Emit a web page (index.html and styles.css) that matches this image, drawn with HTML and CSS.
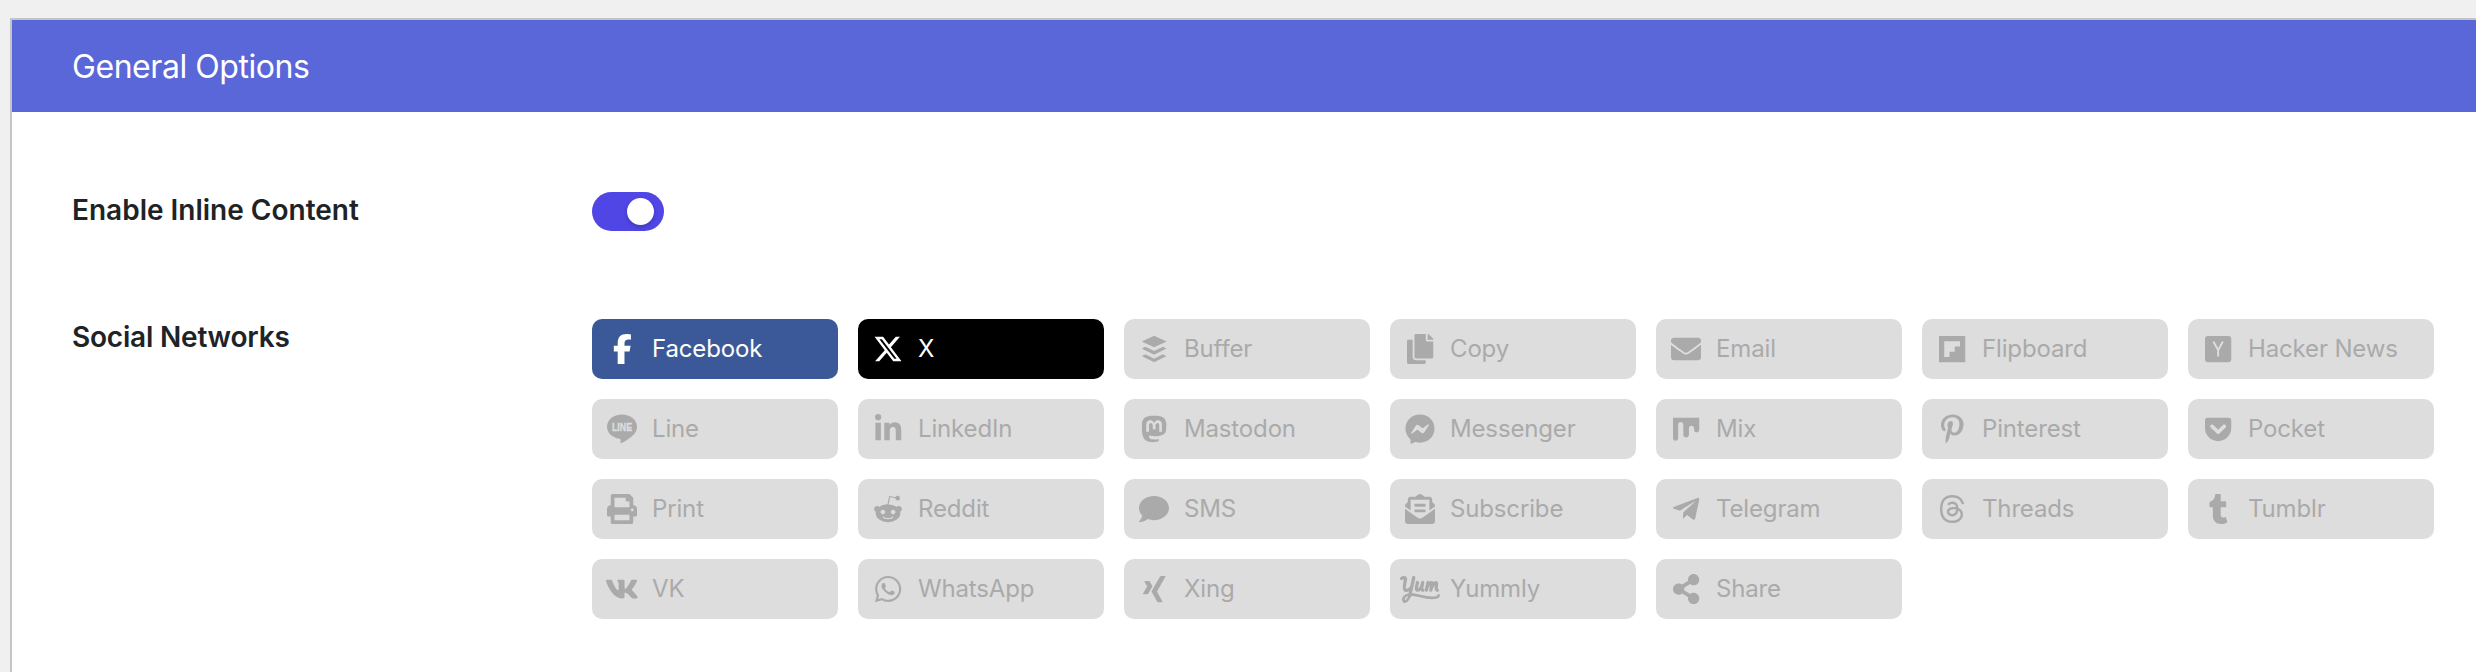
FILE: index.html
```
<!DOCTYPE html>
<html lang="en">
<head>
<meta charset="utf-8">
<title>General Options</title>
<link rel="stylesheet" href="styles.css">
</head>
<body>
<main class="panel">
  <header class="panel-header"><h2 class="panel-title">General Options</h2></header>
  <section class="row row-toggle">
    <div class="row-label label-enable">Enable Inline Content</div>
    <div class="toggle"><span class="knob"></span></div>
  </section>
  <section class="row row-networks">
    <div class="row-label label-social">Social Networks</div>
    <div class="networks">
      <div class="network facebook"><span class="icon"><svg viewBox="0 0 320 512"><path d="M80 299.3V512H196V299.3h86.5l18-97.8H196V166.9c0-51.7 20.3-71.5 72.7-71.5c16.3 0 29.4 .4 37 1.2V7.9C291.4 4 256.4 0 236.2 0C129.3 0 80 50.5 80 159.4v42.1H14v97.8H80z"/></svg></span><span class="name">Facebook</span></div>
      <div class="network x"><span class="icon"><svg viewBox="0 0 512 512"><path d="M389.2 48h70.6L305.6 224.2 487 464H345L233.7 318.6 106.5 464H35.8L200.7 275.5 26.8 48H172.4L272.9 180.9 389.2 48zM364.4 421.8h39.1L151.1 88h-42L364.4 421.8z"/></svg></span><span class="name">X</span></div>
      <div class="network"><span class="icon"><svg viewBox="0 0 448 512"><path d="M427.84 380.67l-196.5 97.82a18.6 18.6 0 0 1-14.67 0L20.16 380.67c-4-2-4-5.28 0-7.29L67.22 350a18.65 18.65 0 0 1 14.69 0l134.76 67a18.51 18.51 0 0 0 14.67 0l134.76-67a18.62 18.62 0 0 1 14.68 0l47.06 23.43c4.05 1.96 4.05 5.24 0 7.24zm0-136.53l-47.06-23.43a18.62 18.62 0 0 0-14.68 0l-134.76 67.08a18.68 18.68 0 0 1-14.67 0L81.91 220.71a18.65 18.65 0 0 0-14.69 0l-47.06 23.43c-4 2-4 5.29 0 7.31l196.51 97.8a18.6 18.6 0 0 0 14.67 0l196.5-97.8c4.05-2.02 4.05-5.3 0-7.31zM20.16 130.42l196.5 90.29a20.08 20.08 0 0 0 14.67 0l196.51-90.29c4-1.86 4-4.89 0-6.74L231.33 33.39a19.88 19.88 0 0 0-14.67 0l-196.5 90.29c-4.05 1.85-4.05 4.88 0 6.74z"/></svg></span><span class="name">Buffer</span></div>
      <div class="network"><span class="icon"><svg viewBox="0 0 448 512"><path d="M320 448v40c0 13.255-10.745 24-24 24H24c-13.255 0-24-10.745-24-24V120c0-13.255 10.745-24 24-24h72v296c0 30.879 25.121 56 56 56h168zm0-344V0H152c-13.255 0-24 10.745-24 24v368c0 13.255 10.745 24 24 24h272c13.255 0 24-10.745 24-24V128H344c-13.2 0-24-10.8-24-24zm120.971-31.029L375.029 7.029A24 24 0 0 0 358.059 0H352v96h96v-6.059a24 24 0 0 0-7.029-16.97z"/></svg></span><span class="name">Copy</span></div>
      <div class="network"><span class="icon"><svg viewBox="0 0 512 512"><path d="M502.3 190.8c3.9-3.1 9.7-.2 9.7 4.7V400c0 26.5-21.5 48-48 48H48c-26.5 0-48-21.5-48-48V195.6c0-5 5.7-7.8 9.7-4.7 22.4 17.4 52.1 39.5 154.1 113.6 21.1 15.4 56.7 47.8 92.2 47.6 35.7.3 72-32.8 92.3-47.6 102-74.1 131.6-96.3 154-113.7zM256 320c23.2.4 56.6-29.2 73.4-41.4 132.7-96.3 142.8-104.7 173.4-128.7 5.8-4.5 9.2-11.5 9.2-18.9v-19c0-26.5-21.5-48-48-48H48c-26.5 0-48 21.5-48 48v19c0 7.4 3.4 14.3 9.2 18.9 30.6 23.9 40.7 32.4 173.4 128.7 16.8 12.2 50.2 41.8 73.4 41.4z"/></svg></span><span class="name">Email</span></div>
      <div class="network"><span class="icon"><svg viewBox="0 0 448 512"><path d="M0 32v448h448V32H0zm358.4 179.2h-89.6v89.6h-89.6v89.6H89.6V121.6h268.8v89.6z"/></svg></span><span class="name">Flipboard</span></div>
      <div class="network"><span class="icon"><svg viewBox="0 0 448 512"><rect y="32" width="448" height="448" rx="48"/><path class="cut" d="M143 128l81 150 81-150M224 270v114" stroke-width="33"/></svg></span><span class="name">Hacker News</span></div>

      <div class="network"><span class="icon"><svg viewBox="0 0 30 30"><path d="M15 .6C6.7.6 0 6 0 12.8c0 6 5.3 11 12.5 12 1.3.3 1.3.9 1 2.7-.2 1.1-.2 2.1 1 1.6C17 28 24.5 23.2 27.6 19.4 29.3 17.4 30 15.2 30 12.8 30 6 23.3.6 15 .6z"/><text class="line-word" x="15" y="17" textLength="20" lengthAdjust="spacingAndGlyphs">LINE</text></svg></span><span class="name">Line</span></div>
      <div class="network"><span class="icon"><svg viewBox="0 0 448 512"><path d="M100.28 448H7.4V148.9h92.88zM53.79 108.1C24.09 108.1 0 83.5 0 53.8a53.79 53.79 0 0 1 107.58 0c0 29.7-24.1 54.3-53.79 54.3zM447.9 448h-92.68V302.4c0-34.7-.7-79.2-48.29-79.2-48.29 0-55.69 37.7-55.69 76.7V448h-92.78V148.9h89.08v40.8h1.3c12.4-23.5 42.69-48.3 87.88-48.3 94 0 111.28 61.9 111.28 142.3V448z"/></svg></span><span class="name">LinkedIn</span></div>
      <div class="network"><span class="icon"><svg viewBox="0 0 448 512"><path d="M433 179.11c0-97.2-63.71-125.7-63.71-125.7-62.52-28.7-228.56-28.4-290.48 0 0 0-63.72 28.5-63.72 125.7 0 115.7-6.6 259.4 105.63 289.1 40.51 10.7 75.32 13 103.33 11.4 50.81-2.8 79.32-18.1 79.32-18.1l-1.7-36.9s-36.31 11.4-77.12 10.1c-40.41-1.4-83-4.4-89.63-54a102.54 102.54 0 0 1-.9-13.9c85.63 20.9 158.65 9.1 178.75 6.7 56.12-6.7 105-41.3 111.23-72.9 9.8-49.8 9-121.5 9-121.5zm-75.12 125.2h-46.63v-114.2c0-49.7-64-51.6-64 6.9v62.5h-46.33V197c0-58.5-64-56.6-64-6.9v114.2H90.19c0-122.1-5.2-147.9 18.41-175 25.9-28.9 79.82-30.8 103.83 6.1l11.6 19.5 11.6-19.5c24.11-37.1 78.12-34.8 103.83-6.1 23.71 27.3 18.4 53 18.4 175z"/></svg></span><span class="name">Mastodon</span></div>
      <div class="network"><span class="icon"><svg viewBox="0 0 512 512"><path d="M256.55 8C116.52 8 8 110.34 8 248.57c0 72.3 29.71 134.78 78.07 177.94 8.35 7.51 6.63 11.86 8.05 58.23A19.92 19.92 0 0 0 122 502.31c52.91-23.3 53.59-25.14 62.56-22.7C337.85 521.8 504 423.7 504 248.57 504 110.34 396.59 8 256.55 8zm149.24 185.13l-73 115.57a37.37 37.37 0 0 1-53.91 9.93l-58.08-43.47a15 15 0 0 0-18 0l-78.37 59.44c-10.46 7.93-24.16-4.6-17.11-15.67l73-115.57a37.36 37.36 0 0 1 53.91-9.93l58.06 43.46a15 15 0 0 0 18 0l78.41-59.38c10.44-7.98 24.14 4.54 17.09 15.62z"/></svg></span><span class="name">Messenger</span></div>
      <div class="network"><span class="icon"><svg viewBox="0 0 448 512"><path d="M0 64v348.9c0 56.2 88 58.1 88 0V174.3c7.9-52.9 88-50.4 88 6.5v175.3c0 57.9 96 58 96 0V240c5.3-54.7 88-52.5 88 4.3v23.8c0 59.9 88 56.6 88 0V64H0z"/></svg></span><span class="name">Mix</span></div>
      <div class="network"><span class="icon"><svg viewBox="0 0 384 512"><path d="M204 6.5C101.4 6.5 0 74.9 0 185.6 0 256 39.6 296 63.6 296c9.9 0 15.6-27.6 15.6-35.4 0-9.3-23.7-29.1-23.7-67.8 0-80.4 61.2-137.4 140.4-137.4 68.1 0 118.5 38.7 118.5 109.8 0 53.1-21.3 152.7-90.3 152.7-24.9 0-46.2-18-46.2-43.8 0-37.8 26.4-74.4 26.4-113.4 0-66.2-93.9-54.2-93.9 25.8 0 16.8 2.1 35.4 9.6 50.7-13.8 59.4-42 147.9-42 209.1 0 18.9 2.7 37.5 4.5 56.4 3.4 3.8 1.7 3.4 6.9 1.5 50.4-69 48.6-82.5 71.4-172.8 12.3 23.4 44.1 36 69.3 36 106.2 0 153.9-103.5 153.9-196.8C384 71.3 298.2 6.5 204 6.5z"/></svg></span><span class="name">Pinterest</span></div>
      <div class="network"><span class="icon"><svg viewBox="0 0 448 512"><path d="M407.6 64h-367C18.5 64 0 82.5 0 104.6v135.2C0 364.5 99.7 464 224.2 464c124 0 223.8-99.5 223.8-224.2V104.6c0-22.4-17.7-40.6-40.4-40.6zm-162 268.5c-12.4 11.8-31.4 11.1-42.4 0C89.5 223.6 88.3 227.4 88.3 209.3c0-16.9 13.8-30.7 30.7-30.7 17 0 16.1 3.8 105.2 89.3 90.6-86.9 88.6-89.3 105.5-89.3 16.9 0 30.7 13.8 30.7 30.7 0 17.8-2.9 15.7-114.8 123.2z"/></svg></span><span class="name">Pocket</span></div>

      <div class="network"><span class="icon"><svg viewBox="0 0 512 512"><path d="M448 192V77.25c0-8.49-3.37-16.62-9.37-22.63L393.37 9.37c-6-6-14.14-9.37-22.63-9.37H96C78.33 0 64 14.33 64 32v160c-35.35 0-64 28.65-64 64v112c0 8.84 7.16 16 16 16h48v96c0 17.67 14.33 32 32 32h320c17.67 0 32-14.33 32-32v-96h48c8.84 0 16-7.16 16-16V256c0-35.35-28.65-64-64-64zm-64 256H128v-96h256v96zm0-224H128V64h192v48c0 8.84 7.16 16 16 16h48v96zm48 72c-13.25 0-24-10.75-24-24 0-13.26 10.75-24 24-24s24 10.74 24 24c0 13.25-10.75 24-24 24z"/></svg></span><span class="name">Print</span></div>
      <div class="network"><span class="icon"><svg viewBox="0 0 512 512"><path d="M440.3 203.5c-15 0-28.2 6.2-37.9 15.9-35.7-24.7-83.8-40.6-137.1-42.3L293 52.3l88.2 19.8c0 21.6 17.6 39.2 39.2 39.2 22 0 39.7-18.1 39.7-39.7s-17.6-39.7-39.7-39.7c-15.4 0-28.7 9.3-35.3 22l-97.4-21.6c-4.9-1.3-9.7 2.2-11 7.1L246.3 177c-52.9 2.2-100.5 18.1-136.3 42.8-9.7-10.1-23.4-16.3-38.4-16.3-55.6 0-73.8 74.6-22.9 100.1-1.8 7.9-2.6 16.3-2.6 24.7 0 83.8 94.4 151.7 210.3 151.7 116.4 0 210.8-67.9 210.8-151.7 0-8.4-.9-17.2-3.1-25.1 49.9-25.6 31.5-99.7-23.8-99.7zM129.4 308.9c0-22 17.6-39.7 39.7-39.7 21.6 0 39.2 17.6 39.2 39.7 0 21.6-17.6 39.2-39.2 39.2-22 .1-39.7-17.6-39.7-39.2zm214.3 93.5c-36.4 36.4-139.1 36.4-175.5 0-4-3.5-4-9.7 0-13.7 3.5-3.5 9.7-3.5 13.2 0 27.8 28.5 120 29 149 0 3.5-3.5 9.7-3.5 13.2 0 4.1 4 4.1 10.2.1 13.7zm-.8-54.2c-21.6 0-39.2-17.6-39.2-39.2 0-22 17.6-39.7 39.2-39.7 22 0 39.7 17.6 39.7 39.7-.1 21.5-17.7 39.2-39.7 39.2z"/></svg></span><span class="name">Reddit</span></div>
      <div class="network"><span class="icon"><svg viewBox="0 0 512 512"><path d="M256 32C114.6 32 0 125.1 0 240c0 49.6 21.4 95 57 130.7C44.5 421.1 2.7 466 2.2 466.5c-2.2 2.3-2.8 5.7-1.5 8.7S4.8 480 8 480c66.3 0 116-31.8 140.6-51.4 32.7 12.3 69 19.4 107.4 19.4 141.4 0 256-93.1 256-208S397.4 32 256 32z"/></svg></span><span class="name">SMS</span></div>
      <div class="network"><span class="icon"><svg viewBox="0 0 512 512"><path d="M176 216h160c8.84 0 16-7.16 16-16v-16c0-8.84-7.16-16-16-16H176c-8.84 0-16 7.16-16 16v16c0 8.84 7.16 16 16 16zm-16 80c0 8.84 7.16 16 16 16h160c8.84 0 16-7.16 16-16v-16c0-8.84-7.16-16-16-16H176c-8.84 0-16 7.16-16 16v16zm96 121.13c-16.42 0-32.84-5.06-46.86-15.19L0 250.86V464c0 26.51 21.49 48 48 48h416c26.51 0 48-21.49 48-48V250.86L302.86 401.94c-14.02 10.12-30.44 15.19-46.86 15.19zm237.61-254.18c-8.85-6.94-17.24-13.47-29.61-22.81V96c0-26.51-21.49-48-48-48h-77.55c-3.04-2.2-5.87-4.26-9.04-6.56C312.6 29.17 279.2-.35 256 0c-23.2-.35-56.59 29.17-73.41 41.44-3.17 2.3-6 4.36-9.04 6.56H96c-26.51 0-48 21.49-48 48v44.14c-12.37 9.33-20.76 15.87-29.61 22.81A47.995 47.995 0 0 0 0 200.72v10.65l96 69.35V96h320v184.72l96-69.35v-10.65c0-14.74-6.78-28.67-18.39-37.77z"/></svg></span><span class="name">Subscribe</span></div>
      <div class="network"><span class="icon"><svg viewBox="0 0 448 512"><path d="M446.7 98.6l-67.6 318.8c-5.1 22.5-18.4 28.1-37.3 17.5l-103-75.9-49.7 47.8c-5.5 5.5-10.1 10.1-20.7 10.1l7.4-104.9 190.9-172.5c8.3-7.4-1.8-11.5-12.9-4.1L117.8 284 16.2 252.2c-22.1-6.9-22.5-22.1 4.6-32.7L418.2 66.4c18.4-6.9 34.5 4.1 28.5 32.2z"/></svg></span><span class="name">Telegram</span></div>
      <div class="network"><span class="icon"><svg viewBox="0 0 448 512"><path d="M331.5 235.7c2.2 .9 4.2 1.9 6.3 2.8c29.2 14.1 50.6 35.2 61.8 61.4c15.7 36.5 17.2 95.8-30.3 143.2c-36.2 36.2-80.3 52.5-142.6 53h-.3c-70.2-.5-124.1-24.1-160.4-70.2c-32.3-41-48.9-98.1-49.5-169.6V256v-.2C17 184.3 33.6 127.2 65.9 86.2C102.2 40.1 156.2 16.5 226.4 16h.3c70.3 .5 124.9 24 162.3 69.9c18.4 22.7 32 50 40.6 81.7l-40.4 10.8c-7.1-25.8-17.8-47.8-32.2-65.4c-29.2-35.8-73-54.2-130.5-54.6c-57 .5-100.1 18.8-128.2 54.4C72.1 146.1 58.5 194.3 58 256c.5 61.7 14.1 109.9 40.3 143.3c28 35.6 71.2 53.9 128.2 54.4c51.4-.4 85.4-12.6 113.7-40.9c32.3-32.2 31.7-71.8 21.4-95.9c-6.1-14.2-17.1-26-31.9-34.9c-3.7 26.9-11.8 48.3-24.7 64.8c-17.1 21.8-41.4 33.6-72.7 35.3c-23.6 1.3-46.3-4.4-63.9-16c-20.8-13.8-33-34.8-34.3-59.3c-2.5-48.3 35.7-83 95.2-86.4c21.1-1.2 40.9-.3 59.2 2.8c-2.4-14.8-7.3-26.6-14.6-35.2c-10-11.7-25.6-17.7-46.2-17.8H227c-16.6 0-39 4.6-53.3 26.3l-34.4-23.6c19.2-29.1 50.3-45.1 87.8-45.1h.8c62.6 .4 99.9 39.5 103.7 107.7l-.2 .2zm-156 68.8c1.3 25.1 28.4 36.8 54.6 35.3c25.6-1.4 54.6-11.4 59.5-73.2c-13.2-2.9-27.8-4.4-43.4-4.4c-4.8 0-9.6 .1-14.4 .4c-42.9 2.4-57.2 23.2-56.2 41.8l-.1 .1z"/></svg></span><span class="name">Threads</span></div>
      <div class="network"><span class="icon"><svg viewBox="0 0 320 512"><path d="M309.8 480.3c-13.6 14.5-50 31.7-97.4 31.7-120.8 0-147-88.8-147-140.6v-144H17.9c-5.5 0-10-4.5-10-10v-68c0-7.2 4.5-13.6 11.3-16 62-21.8 81.5-76 84.3-117.1.8-11 6.5-16.3 16.1-16.3h70.9c5.5 0 10 4.5 10 10v115.2h83c5.5 0 10 4.4 10 9.9v81.7c0 5.5-4.5 10-10 10h-83.4V360c0 34.2 23.7 53.6 68 35.8 4.8-1.9 9-3.2 12.7-2.2 3.5.9 5.8 3.4 7.4 7.9l22 64.3c1.8 5 3.3 10.6-.4 14.5z"/></svg></span><span class="name">Tumblr</span></div>

      <div class="network"><span class="icon"><svg viewBox="0 0 576 512"><path d="M545 117.7c3.7-12.5 0-21.7-17.8-21.7h-58.9c-15 0-21.9 7.9-25.6 16.7 0 0-30 73.1-72.4 120.5-13.7 13.7-20 18.1-27.5 18.1-3.7 0-9.4-4.4-9.4-16.9V117.7c0-15-4.2-21.7-16.6-21.7h-92.6c-9.4 0-15 7-15 13.5 0 14.2 21.2 17.5 23.4 57.5v86.8c0 19-3.4 22.5-10.9 22.5-20 0-68.6-73.4-97.4-157.4-5.8-16.3-11.5-22.9-26.6-22.9H38.8c-16.8 0-20.2 7.9-20.2 16.7 0 15.6 20 93.1 93.1 195.5C160.4 378.1 229 416 291.4 416c37.5 0 42.1-8.4 42.1-22.9 0-66.8-3.4-73.1 15.4-73.1 8.7 0 23.7 4.4 58.7 38.1 40 40 46.6 57.9 69 57.9h58.9c16.8 0 25.3-8.4 20.4-25-11.2-34.9-86.9-106.7-90.3-111.5-8.7-11.2-6.2-16.2 0-26.2.1-.1 72-101.3 79.4-135.6z"/></svg></span><span class="name">VK</span></div>
      <div class="network"><span class="icon"><svg viewBox="0 0 448 512"><path d="M380.9 97.1C339 55.1 283.2 32 223.9 32c-122.4 0-222 99.6-222 222 0 39.1 10.2 77.3 29.6 111L0 480l117.7-30.9c32.4 17.7 68.9 27 106.1 27h.1c122.3 0 224.1-99.6 224.1-222 0-59.3-25.2-115-67.1-157zm-157 341.6c-33.2 0-65.7-8.9-94-25.7l-6.7-4-69.8 18.3L72 359.2l-4.4-7c-18.5-29.4-28.2-63.3-28.2-98.2 0-101.7 82.8-184.5 184.6-184.5 49.3 0 95.6 19.2 130.4 54.1 34.8 34.9 56.2 81.2 56.1 130.5 0 101.8-84.9 184.6-186.6 184.6zm101.2-138.2c-5.5-2.8-32.8-16.2-37.9-18-5.1-1.9-8.8-2.8-12.5 2.8-3.7 5.6-14.3 18-17.6 21.8-3.2 3.7-6.5 4.2-12 1.4-32.6-16.3-54-29.1-75.5-66-5.7-9.8 5.7-9.1 16.3-30.3 1.8-3.7.9-6.9-.5-9.7-1.4-2.8-12.5-30.1-17.1-41.2-4.5-10.8-9.1-9.3-12.5-9.5-3.2-.2-6.9-.2-10.6-.2-3.7 0-9.7 1.4-14.8 6.9-5.1 5.6-19.4 19-19.4 46.3 0 27.3 19.9 53.7 22.6 57.4 2.8 3.7 39.1 59.7 94.8 83.8 35.2 15.2 49 16.5 66.6 13.9 10.7-1.6 32.8-13.4 37.4-26.4 4.6-13 4.6-24.1 3.2-26.4-1.3-2.5-5-3.9-10.5-6.6z"/></svg></span><span class="name">WhatsApp</span></div>
      <div class="network"><span class="icon"><svg viewBox="0 0 384 512"><path d="M162.7 210c-1.8 3.3-25.2 44.4-70.1 123.5-4.9 8.3-10.8 12.5-17.7 12.5H9.8c-7.7 0-12.1-7.5-8.5-14.4l69-121.3c.2 0 .2-.1 0-.3l-43.9-75.6c-4.3-7.8.3-14.1 8.5-14.1H100c7.3 0 13.3 4.1 18 12.2l44.7 77.5zM382.6 46.1l-144 253v.3L330.2 466c3.9 7.1.2 14.1-8.5 14.1h-65.2c-7.6 0-13.6-4-18-12.2l-92.4-168.5c3.3-5.8 51.5-90.8 144.8-255.2 4.6-8.1 10.4-12.2 17.5-12.2h65.7c8 0 12.3 6.7 8.5 14.1z"/></svg></span><span class="name">Xing</span></div>
      <div class="network"><span class="icon"><svg viewBox="0 0 40 30"><g class="strokes"><path class="heavy" d="M1.5 4.5C3.2 3.2 5.8 3 5.5 5.200 5.200 8 2.800 15 5.500 16.200 8.500 17 11 14 12 11.500M13.800 3.500C12.500 9 11 16.500 9.700 22"/><path d="M9.700 21.500C8.500 26 5.500 28.300 4 27.300 2.300 25.500 4 21.200 9 20.500 17 19.500 26 25.800 36 23.500 38 23 38.800 22 38.600 21.200"/><path class="heavy" d="M17.500 8.500C16.500 12 15.500 16 17.700 16.200 20 16.200 21.800 12.500 22.700 8.500 22 12 21.200 15.800 22.800 16.200M26.300 16.200L28 8.500C28 12 27.300 13.500 27.800 12 29 9 32 7.500 32 9.500L30.800 16.200C32 11 35 7.800 36.500 9 37.200 10.500 34.800 15.500 37.300 16.200"/></g></svg></span><span class="name">Yummly</span></div>
      <div class="network"><span class="icon"><svg viewBox="0 0 448 512"><path d="M352 320c-22.608 0-43.387 7.819-59.79 20.895l-102.486-64.054a96.551 96.551 0 0 0 0-41.683l102.486-64.054C308.613 184.181 329.392 192 352 192c53.019 0 96-42.981 96-96S405.019 0 352 0s-96 42.981-96 96c0 7.158.79 14.13 2.276 20.841L155.79 180.895C139.387 167.819 118.608 160 96 160c-53.019 0-96 42.981-96 96s42.981 96 96 96c22.608 0 43.387-7.819 59.79-20.895l102.486 64.054A96.301 96.301 0 0 0 256 416c0 53.019 42.981 96 96 96s96-42.981 96-96-42.981-96-96-96z"/></svg></span><span class="name">Share</span></div>
    </div>
  </section>
</main>
</body>
</html>
```
FILE: styles.css
```
* { box-sizing: border-box; }
body {
  margin: 0;
  padding: 18px 0 0 10px;
  height: 672px;
  overflow: hidden;
  background: #f0f0f1;
  color: #1d2327;
  font-family: Inter, "Liberation Sans", sans-serif;
}
.panel {
  height: 654px;
  border: solid #c3c4c7;
  border-width: 2px 0 0 2px;
  background: #fff;
}
.panel-header {
  display: flex;
  align-items: center;
  height: 92px;
  padding: 2px 0 0 60px;
  background: #5a67d8;
}
.panel-title {
  margin: 0;
  color: #fff;
  font-size: 32px;
  font-weight: 400;
  line-height: 40px;
  letter-spacing: -.45px;
}
.row {
  display: grid;
  grid-template-columns: 520px auto;
  justify-content: start;
  padding-left: 60px;
}
.row-toggle { padding-top: 80px; height: 207px; }
.row-label {
  font-size: 28px;
  font-weight: 600;
  line-height: 36px;
}
.label-social { letter-spacing: -.2px; }
.toggle {
  display: flex;
  align-items: center;
  justify-content: flex-end;
  width: 72px;
  height: 39px;
  padding-right: 10px;
  border-radius: 20px;
  background: #4f46e5;
}
.knob {
  width: 27px;
  height: 27px;
  border-radius: 50%;
  background: #fff;
  box-shadow: 0 2px 4px rgba(0, 0, 0, .2);
}
.networks {
  display: grid;
  grid-template-columns: repeat(7, 246px);
  grid-auto-rows: 60px;
  gap: 20px;
}
.network {
  display: flex;
  align-items: center;
  border-radius: 10px;
  background: #ddd;
  color: #aaa;
}
.facebook { background: #3b5998; color: #fff; }
.x { background: #000; color: #fff; }
.icon {
  display: flex;
  justify-content: center;
  width: 60px;
}
.icon svg {
  height: 30px;
  fill: currentColor;
  overflow: visible;
}
.cut { fill: none; stroke: #ddd; }
.strokes {
  fill: none;
  stroke: currentColor;
  stroke-width: 2.6;
  stroke-linecap: round;
  stroke-linejoin: round;
}
.heavy { stroke-width: 3.3; }
.line-word {
  fill: #ddd;
  stroke: #ddd;
  stroke-width: .4;
  font: 700 11px "Liberation Sans", sans-serif;
  text-anchor: middle;
}
.name {
  font-size: 24px;
  line-height: 30px;
  letter-spacing: -.15px;
}
```
